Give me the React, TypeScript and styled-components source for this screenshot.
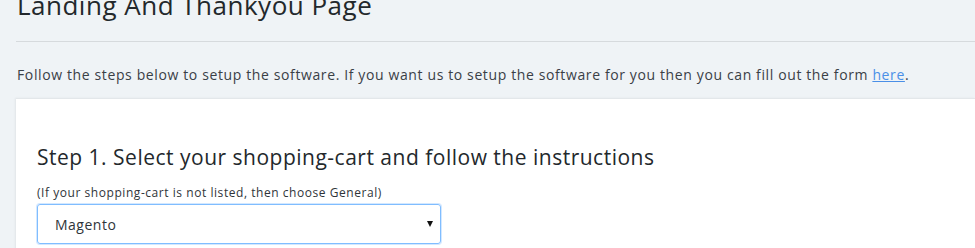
import React from 'react';
import styled, { createGlobalStyle } from 'styled-components';

const GlobalStyle = createGlobalStyle`
  html, body {
    margin: 0;
    padding: 0;
    background: #eff3f6;
    font-family: 'Open Sans', 'Liberation Sans', sans-serif;
    color: #2f353a;
    overflow: hidden;
  }
`;

const Page = styled.div`
  padding: 0 0 0 16px;
  margin-top: -11px;
`;

const Title = styled.h1`
  margin: 0;
  padding: 0 0 20px 1px;
  font-size: 26px;
  font-weight: 400;
  line-height: 32px;
  letter-spacing: 0.5px;
  color: #23282c;
  border-bottom: 1px solid #d6dadd;
`;

const Intro = styled.p`
  margin: 0;
  padding: 23px 0 13px 1px;
  font-size: 14px;
  line-height: 20px;
  letter-spacing: 0.62px;
  color: #3a4046;

  a {
    color: #4a8fe7;
    text-decoration: underline;
  }
`;

const Card = styled.section`
  background: #ffffff;
  border-top: 1px solid #e3e7ea;
  box-shadow: -1px 0 2px rgba(0, 0, 0, 0.06);
  padding: 44px 21px 30px;
  min-height: 200px;
`;

const StepHeading = styled.h2`
  margin: 0 0 15px;
  font-size: 21px;
  font-weight: 400;
  line-height: 28px;
  letter-spacing: 0.5px;
  color: #23282c;
`;

const Hint = styled.div`
  font-size: 12px;
  line-height: 14px;
  letter-spacing: 0.55px;
  color: #2f353a;
  margin-bottom: 4px;
`;

const SelectBox = styled.div`
  width: 404px;
  height: 40px;
  box-sizing: border-box;
  border: 1px solid #80bdff;
  border-radius: 3px;
  box-shadow: 0 0 0 1px rgba(128, 189, 255, 0.35);
  display: flex;
  align-items: center;
  justify-content: space-between;
  padding: 0 7px 0 17px;
  font-size: 14px;
  letter-spacing: 0.5px;
  color: #2f353a;
`;

const Caret = styled.span`
  width: 0;
  height: 0;
  border-left: 3.5px solid transparent;
  border-right: 3.5px solid transparent;
  border-top: 6px solid #111;
`;

export default function App() {
  return (
    <>
      <GlobalStyle />
      <Page>
        <Title>Landing And Thankyou Page</Title>
        <Intro>
          Follow the steps below to setup the software. If you want us to setup the software for you then you can fill
          out the form <a href="#">here</a>.
        </Intro>
        <Card>
          <StepHeading>Step 1. Select your shopping-cart and follow the instructions</StepHeading>
          <Hint>(If your shopping-cart is not listed, then choose General)</Hint>
          <SelectBox>
            <span>Magento</span>
            <Caret />
          </SelectBox>
        </Card>
      </Page>
    </>
  );
}
